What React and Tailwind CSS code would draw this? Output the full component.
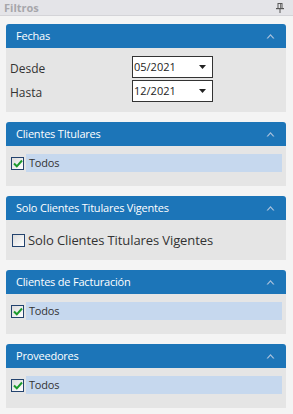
const font = { fontFamily: '"Open Sans", "Liberation Sans", sans-serif' };

function ChevronUp() {
  return (
    <svg width="9" height="6" viewBox="0 0 9 6" className="mr-[3px]">
      <path d="M0.5 5.5 L4.5 1 L8.5 5.5 L7 5.5 L4.5 2.8 L2 5.5 Z" fill="#a9c1dc" />
    </svg>
  );
}

function PinIcon() {
  return (
    <svg width="8" height="10" viewBox="0 0 8 10">
      <rect x="2" y="0.5" width="4" height="5" fill="none" stroke="#555" />
      <rect x="0" y="5" width="8" height="1.2" fill="#555" />
      <rect x="3.5" y="6" width="1" height="4" fill="#555" />
      <rect x="4" y="1" width="1" height="4" fill="#777" />
    </svg>
  );
}

function Panel({ title, children, body }) {
  return (
    <div className="flex flex-col">
      <div className="h-6 bg-[#1c75b8] rounded-t-[3px] flex items-center justify-between pl-[10px] pr-[8px]">
        <span className="text-white text-[11px] tracking-[-0.2px]">{title}</span>
        <ChevronUp />
      </div>
      <div className={`bg-[#e5e5e5] ${body}`}>{children}</div>
    </div>
  );
}

function Check({ checked }) {
  return (
    <div className="w-[13px] h-[13px] border border-[#23436e] bg-gradient-to-br from-[#dcdcdc] to-white flex items-center justify-center shrink-0">
      {checked && (
        <svg width="10" height="9" viewBox="0 0 10 9">
          <path d="M1 4.5 L3.8 7.3 L9 1.5" fill="none" stroke="#1c9a2c" strokeWidth="2" />
        </svg>
      )}
    </div>
  );
}

function TodosRow() {
  return (
    <div className="flex items-center pl-[5px] pr-[4px]">
      <Check checked />
      <div className="flex-1 ml-[2px] h-[18px] bg-[#c6d8ee] flex items-center pl-[3px] text-[11px] tracking-[-0.2px] text-[#333]">Todos</div>
    </div>
  );
}

function Select({ value }) {
  return (
    <div className="w-[81px] h-[22px] border border-[#333] bg-white flex items-center justify-between pl-[1px] pr-[6px]">
      <span className="text-[11px] text-[#222]">{value}</span>
      <svg width="7" height="4" viewBox="0 0 7 4">
        <path d="M0 0 L7 0 L3.5 4 Z" fill="#222" />
      </svg>
    </div>
  );
}

export default function App() {
  return (
    <div className="w-[293px] h-[414px] bg-[#f4f4f4] overflow-hidden" style={font}>
      <div className="h-4 bg-[#e4e4e8] border-b border-[#d4d4d8] flex items-center justify-between pl-[4px] pr-[9px]">
        <span className="text-[11px] font-bold text-[#a7a7ab] leading-none">Filtros</span>
        <PinIcon />
      </div>
      <div className="flex flex-col gap-[10px] pl-[6px] pr-[7px] pt-2">
        <Panel title="Fechas" body="h-16 pt-2 pl-1 flex flex-col gap-[2px]">
          <div className="flex items-center">
            <span className="w-[122px] text-[12px] text-[#333] pt-[4px]">Desde</span>
            <Select value="05/2021" />
          </div>
          <div className="flex items-center">
            <span className="w-[122px] text-[12px] text-[#333] pt-[4px]">Hasta</span>
            <Select value="12/2021" />
          </div>
        </Panel>
        <Panel title="Clientes TItulares" body="h-10 pt-2">
          <TodosRow />
        </Panel>
        <Panel title="Solo Clientes Titulares Vigentes" body="h-10 pt-[11px]">
          <div className="flex items-center pl-[6px] gap-[3px]">
            <Check />
            <span className="text-[13px] text-[#333] tracking-[-0.1px]">Solo Clientes Titulares Vigentes</span>
          </div>
        </Panel>
        <Panel title="Clientes de Facturación" body="h-10 pt-2">
          <TodosRow />
        </Panel>
        <Panel title="Proveedores" body="h-10 pt-2">
          <TodosRow />
        </Panel>
      </div>
    </div>
  );
}
